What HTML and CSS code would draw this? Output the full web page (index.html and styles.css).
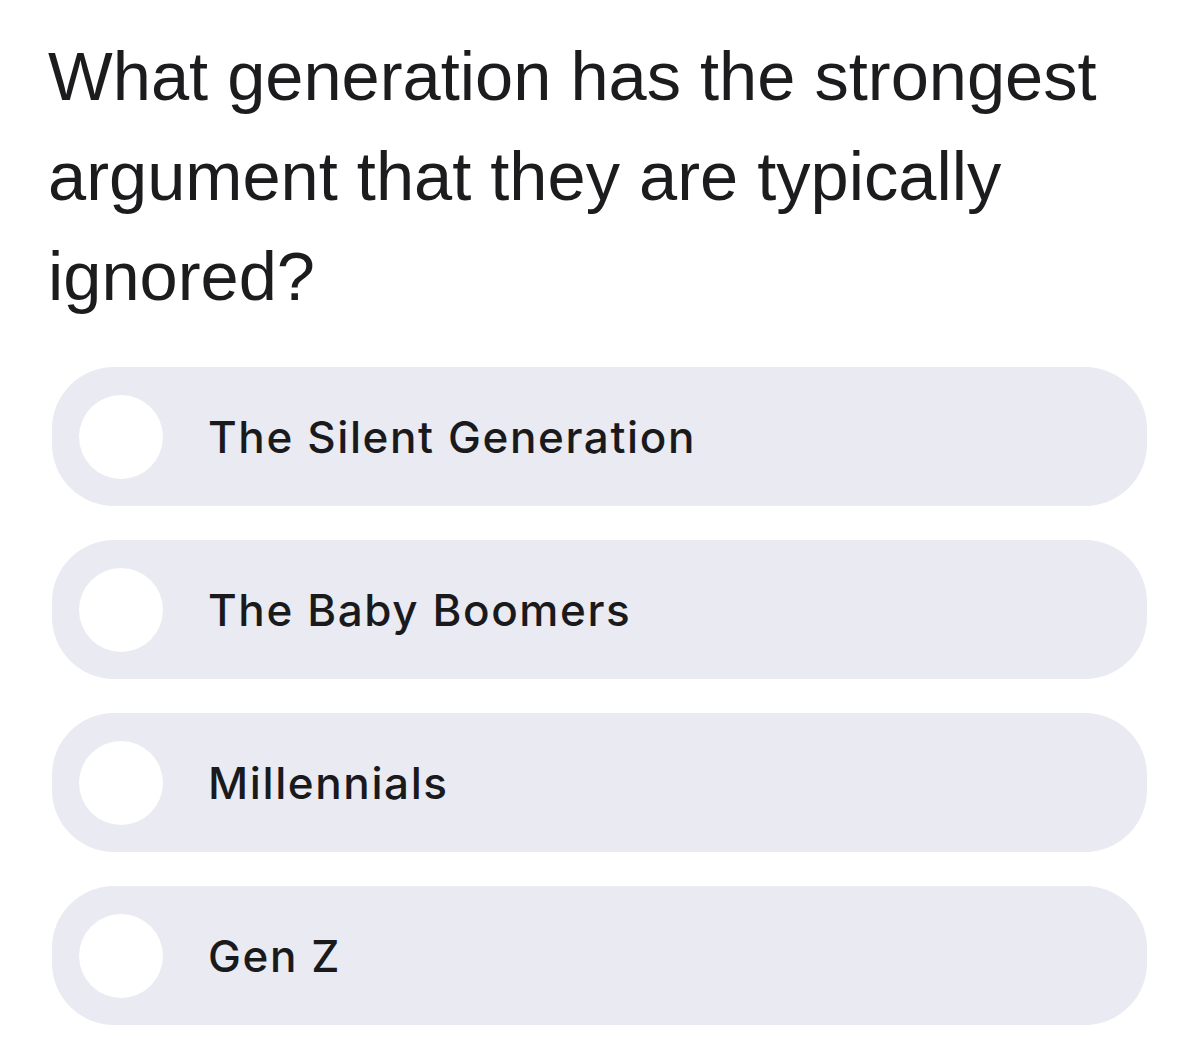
FILE: index.html
```html
<!DOCTYPE html>
<html lang="en">
<head>
  <meta charset="UTF-8" />
  <title>Generation Poll</title>
  <meta name="viewport" content="width=device-width, initial-scale=1.0" />
  <link rel="stylesheet" href="styles.css">
</head>
<body>
  <h1 class="question">What generation has the strongest argument that they are typically ignored?</h1>

  <div class="options">
    <label class="option">
      <span class="radio"></span>
      <span class="option-text">The Silent Generation</span>
    </label>
    <label class="option">
      <span class="radio"></span>
      <span class="option-text">The Baby Boomers</span>
    </label>
    <label class="option">
      <span class="radio"></span>
      <span class="option-text">Millennials</span>
    </label>
    <label class="option">
      <span class="radio"></span>
      <span class="option-text">Gen Z</span>
    </label>
  </div>
</body>
</html>
```

FILE: styles.css
```css
body {
  margin: 0;
  padding: 27px 53px 0 48px;
  background: #ffffff;
  color: #1c1c1e;
  font-family: 'Liberation Sans', Arial, sans-serif;
}
.question {
  margin: 0;
  font-size: 68.6px;
  font-weight: 400;
  line-height: 100px;
  max-width: 1080px;
}
.options {
  margin-top: 40px;
  margin-left: 4px;
  display: flex;
  flex-direction: column;
  gap: 34px;
}
.option {
  display: flex;
  align-items: center;
  height: 139px;
  padding-left: 27px;
  background: #e9eaf2;
  border-radius: 62px;
  cursor: pointer;
}
.radio {
  width: 84px;
  height: 84px;
  border-radius: 50%;
  background: #ffffff;
  flex-shrink: 0;
}
.option-text {
  margin-left: 45px;
  font-family: 'Inter', 'Liberation Sans', sans-serif;
  font-size: 44px;
  font-weight: 500;
  letter-spacing: 1.6px;
  color: #1a1a1c;
}
```
